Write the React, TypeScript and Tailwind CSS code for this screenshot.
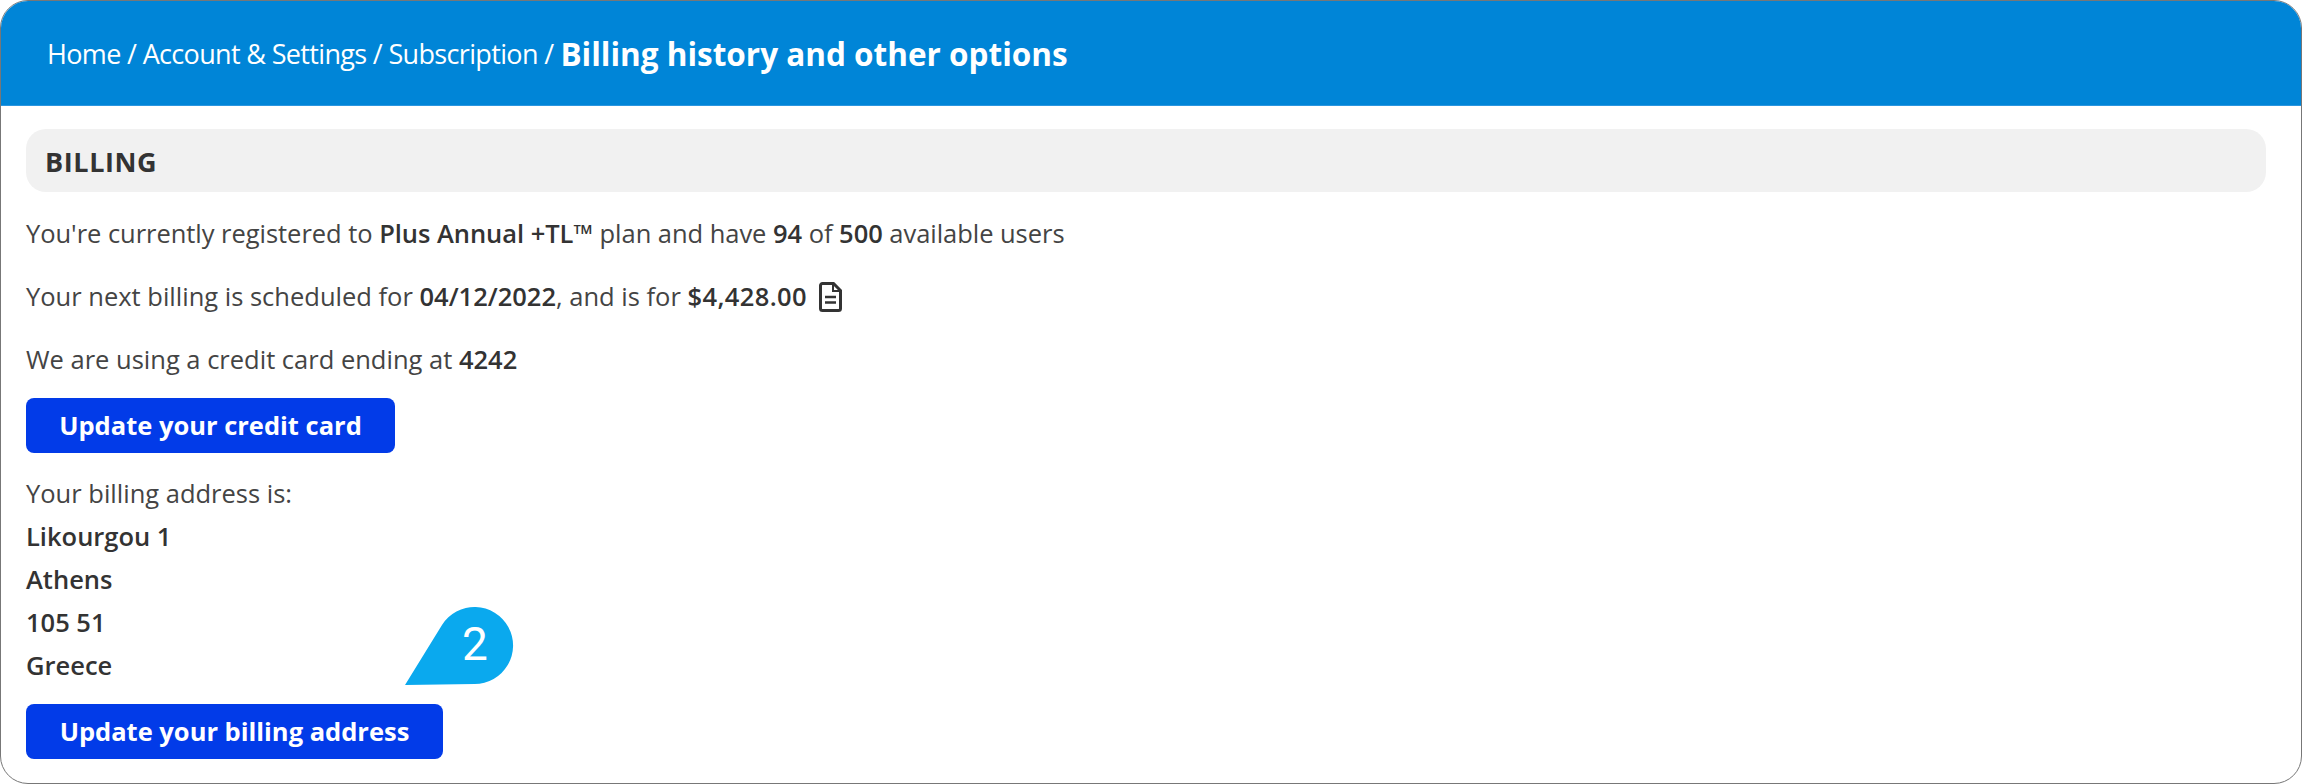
import { Fragment } from 'react';

const address = ['Likourgou 1', 'Athens', '105 51', 'Greece'];

function UpdateButton({ label, width }: { label: string; width: string }) {
    return (
        <button className={`${width} h-[55px] rounded-lg bg-[#023be8] text-[25.5px] font-bold text-white flex items-center justify-center`}>
            {label}
        </button>
    );
}

export default function App() {
    return (
        <div className="h-[784px] w-[2302px] bg-white font-['Open_Sans',sans-serif]">
            <div className="relative h-[784px] overflow-hidden rounded-[28px] border border-[#777] bg-white text-[25.5px] text-[#444]">
                <header className="flex h-[105px] items-center border-b border-[#2b96e0] bg-[#0085d7] pl-[46px] pt-[2px] text-white">
                    <span className="text-[27px] tracking-[-0.66px]">
                        {['Home', 'Account & Settings', 'Subscription'].map(crumb => (
                            <Fragment key={crumb}>{crumb} / </Fragment>
                        ))}
                    </span>
                    <span className="ml-[7px] text-[31.5px] font-bold">Billing history and other options</span>
                </header>

                <div className="pl-[25px] pr-[35px] pt-[23px]">
                    <h2 className="flex h-[63px] items-center rounded-[20px] bg-[#f1f1f1] pl-[19px] pt-[3px] text-[27px] font-bold tracking-[0.6px] text-[#333]">
                        BILLING
                    </h2>

                    <p className="mt-[20px] h-[43px] leading-[43px] tracking-[-0.04px]">
                        You're currently registered to <b className="font-semibold text-[#333]">Plus Annual +TL™</b> plan and have <b className="font-semibold text-[#333]">94</b> of <b className="font-semibold text-[#333]">500</b> available users
                    </p>
                    <p className="mt-[20px] flex h-[43px] items-center leading-[43px] whitespace-pre">
                        Your next billing is scheduled for <b className="font-semibold text-[#333]">04/12/2022</b>, and is for <b className="font-semibold tracking-[0.4px] text-[#333]">$4,428.00</b>
                        <svg viewBox="0 0 23 30" className="ml-[12px] h-[30px] w-[23px] fill-none stroke-[#333] stroke-[3]">
                            <path d="M3.5 1.5H14.5L21.5 8.5V26.5A2 2 0 0 1 19.5 28.5H3.5A2 2 0 0 1 1.5 26.500V3.500A2 2 0 0 1 3.500 1.500Z" />
                            <path d="M14 2V9H21" strokeWidth="2" />
                            <path d="M6 15H17M6 20.500H17" strokeWidth="2.500" />
                        </svg>
                    </p>
                    <p className="mt-[20px] h-[43px] leading-[43px]">
                        We are using a credit card ending at <b className="font-semibold text-[#333]">4242</b>
                    </p>

                    <div className="mt-[17px]">
                        <UpdateButton label="Update your credit card" width="w-[369px]" />
                    </div>

                    <p className="mt-[19px] leading-[43px]">Your billing address is:</p>
                    {address.map(line => (
                        <p key={line} className="font-semibold leading-[43px] text-[#333]">{line}</p>
                    ))}

                    <div className="mt-[17px]">
                        <UpdateButton label="Update your billing address" width="w-[417px]" />
                    </div>
                </div>

                {/* callout marker */}
                <div className="absolute left-[404px] top-[606px] h-[78px] w-[109px]">
                    <svg viewBox="0 0 109 78" className="h-full w-full fill-[#0aa9ee]">
                        <path d="M0 78L37 18A38.500 38.500 0 1 1 69.500 77Z" />
                    </svg>
                    <span className="absolute left-[50px] top-[10px] w-[40px] text-center font-['Roboto',sans-serif] text-[46px] leading-[54px] font-normal text-white">2</span>
                </div>
            </div>
        </div>
    );
}
